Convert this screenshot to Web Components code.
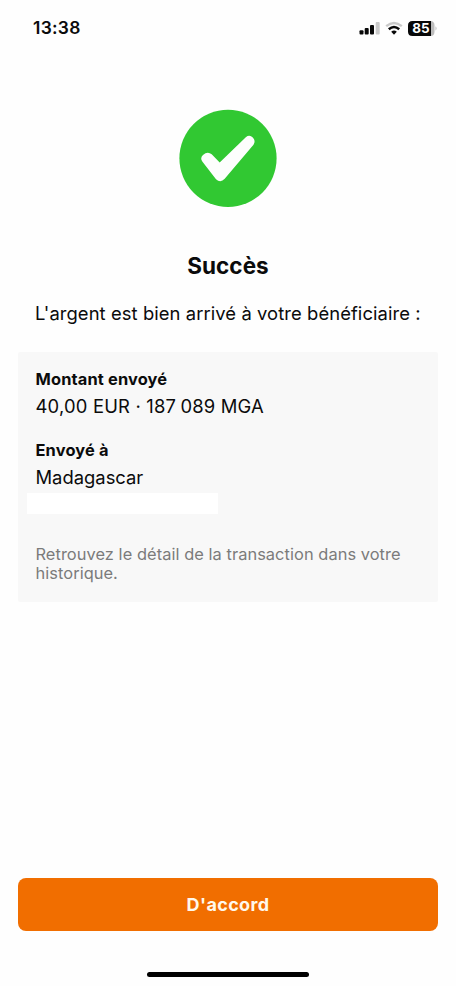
<!DOCTYPE html>
<html lang="fr"><head><meta charset="utf-8"><title>Succès</title>
<style>
html,body{margin:0;height:100%}
body{background:#fefefe;color:#0b0b0b;font-family:Inter,"Liberation Sans",sans-serif;overflow:hidden}
</style></head><body>
<success-screen></success-screen>
<script>
const define = (name, html) => customElements.define(name, class extends HTMLElement {
  constructor() {
    super();
    const t = document.createElement('template');
    t.innerHTML = html;
    this.attachShadow({ mode: 'open' }).append(t.content.cloneNode(true));
  }
});

define('status-bar', `
<style>
:host{display:flex;height:56px;align-items:center;justify-content:space-between;padding:0 19px 0 33px;box-sizing:border-box}
time{font-size:17.4px;font-weight:600;line-height:20px;letter-spacing:.3px}
svg{display:block}
</style>
<time>13:38</time>
<svg width="78" height="18" viewBox="359 18 78 18">
  <g fill="#080808"><rect x="359.5" y="29.3" width="4" height="4.2" rx="1"/><rect x="364.7" y="27" width="4" height="6.5" rx="1"/><rect x="370" y="24" width="4" height="9.5" rx="1"/></g>
  <rect x="375.7" y="21" width="4" height="12.5" rx="1" fill="#c9c9c9"/>
  <path d="M386.2 25.2Q394 18.6 401.8 25.2" fill="none" stroke="#c9c9c9" stroke-width="2.4"/>
  <path d="M388.8 28.2Q394 23.8 399.2 28.2" fill="none" stroke="#080808" stroke-width="2.5"/>
  <path d="M391.2 30.8Q394 28.4 396.8 30.8L394 33.8Z" fill="#080808"/>
  <path d="M430 20H430.5Q434.5 20 434.5 24.5V30.5Q434.5 35 430.5 35H430Z" fill="#bdbdbd"/>
  <path d="M412.5 20H431V35H412.5Q408 35 408 30.5V24.5Q408 20 412.5 20Z" fill="#080808"/>
  <path d="M435.5 25.3Q437.6 27.5 435.5 29.7Z" fill="#bdbdbd"/>
  <text x="421" y="32.2" text-anchor="middle" font-size="13.4" font-weight="700" fill="#fff">85</text>
</svg>`);

define('success-mark', `
<style>:host{display:block;width:98px;height:98px}svg{display:block}</style>
<svg width="98" height="98" viewBox="0 0 98 98"><circle cx="49" cy="49.3" r="48.6" fill="#31c832"/>
<path d="M23.3 52.5Q20.8 49 24 46Q28.5 41.8 32.7 45.2L40.7 53.6L66.8 28.3Q70.5 25.3 73.8 28.6Q77 32 74.5 35.8L45.7 69.8Q41.5 74.3 37 70.2Z" fill="#fdfefd"/></svg>`);

define('detail-field', `
<style>
:host{display:block}
.l{font-size:16.4px;font-weight:700;line-height:24px;letter-spacing:.16px}
.v{font-size:18.4px;line-height:24px;padding:3px 0 1px;letter-spacing:var(--value-spacing,0)}
</style>
<div class="l"><slot name="label"></slot></div><div class="v"><slot></slot></div>`);

define('info-card', `
<style>:host{display:block;box-sizing:border-box;height:250px;background:#f8f8f8;border-radius:2px;padding:15px 17px 0 17.5px}</style><slot></slot>`);

define('primary-button', `
<style>:host{display:block}
button{display:block;width:100%;height:53px;border:0;border-radius:8px;padding:0;background:#f16e00;color:#fff8ec;font:700 18px/53px Inter,"Liberation Sans",sans-serif;letter-spacing:.35px}</style>
<button><slot></slot></button>`);

define('success-screen', `
<style>
:host{display:flex;flex-direction:column;height:986px;width:456px}
success-mark{margin:53px auto 0}
h1{margin:43.5px 0 0;font-size:22.5px;font-weight:700;line-height:30px;text-align:center;letter-spacing:.05px}
p{margin:0}
.lead{font-size:18.4px;line-height:24px;margin:20px 0 0 35px;white-space:nowrap;letter-spacing:.08px}
info-card{margin:27.5px 18px 0}
.amount{--value-spacing:.2px}
.thin{word-spacing:-1.2px}
detail-field+detail-field{margin-top:19px}
.mask{width:191px;height:21px;background:#fff;margin:3px 0 0 -8.5px}
.note{font-size:16.4px;line-height:19.5px;color:#7b7b7b;margin-top:30.5px;letter-spacing:.06px;white-space:nowrap}
primary-button{margin:auto 18px 0}
.home{width:162px;height:5.5px;border-radius:3px;background:#000;margin:40.5px auto 9px}
</style>
<status-bar></status-bar>
<success-mark></success-mark>
<h1>Succès</h1>
<p class="lead">L'argent est bien arrivé à votre bénéficiaire :</p>
<info-card>
  <detail-field class="amount"><span slot="label">Montant envoyé</span>40,00 EUR · <span class="thin">187 089</span> MGA</detail-field>
  <detail-field><span slot="label">Envoyé à</span>Madagascar</detail-field>
  <div class="mask"></div>
  <p class="note">Retrouvez le détail de la transaction dans votre<br>historique.</p>
</info-card>
<primary-button>D'accord</primary-button>
<div class="home"></div>`);
</script></body></html>
